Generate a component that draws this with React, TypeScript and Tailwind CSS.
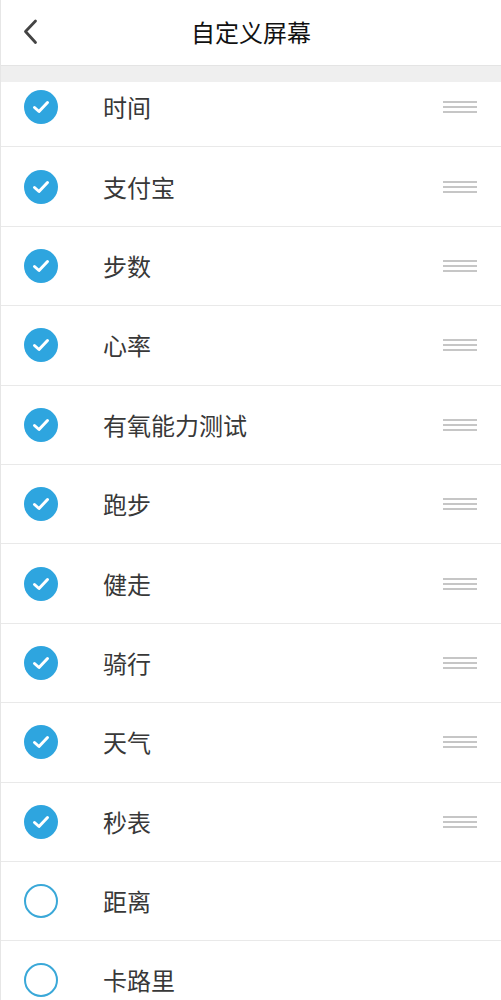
const items = [
  { name: "时间", on: true },
  { name: "支付宝", on: true },
  { name: "步数", on: true },
  { name: "心率", on: true },
  { name: "有氧能力测试", on: true },
  { name: "跑步", on: true },
  { name: "健走", on: true },
  { name: "骑行", on: true },
  { name: "天气", on: true },
  { name: "秒表", on: true },
  { name: "距离", on: false },
  { name: "卡路里", on: false },
];

function Check({ on }: { on: boolean }) {
  if (!on) {
    return (
      <div className="w-[34px] h-[34px] rounded-full border-2 border-[#3aa8d8] bg-white" />
    );
  }
  return (
    <div className="w-[34px] h-[34px] rounded-full bg-[#2ea5df] flex items-center justify-center">
      <svg width="22" height="22" viewBox="0 0 22 22" fill="none">
        <path
          d="M4.5 11.5 L9 15.5 L17.5 6.5"
          stroke="white"
          strokeWidth="3"
          strokeLinecap="round"
          strokeLinejoin="round"
        />
      </svg>
    </div>
  );
}

function Handle() {
  return (
    <div className="flex flex-col gap-[3px] w-[34px]">
      <div className="h-[2px] bg-[#c6c6c6]" />
      <div className="h-[2px] bg-[#c6c6c6]" />
      <div className="h-[2px] bg-[#c6c6c6]" />
    </div>
  );
}

function Row({ name, on }: { name: string; on: boolean }) {
  return (
    <div className="h-[79.4px] flex items-center border-b border-[#e9e9e9] pl-[23px] pr-[24px]">
      <Check on={on} />
      <span className="ml-[45px] flex-1 text-[24px] leading-none text-[#383838]">{name}</span>
      {on && <Handle />}
    </div>
  );
}

export default function App() {
  return (
    <div
      className="w-[501px] h-[1000px] overflow-hidden bg-white border-l border-[#e6e6e6]"
      style={{ fontFamily: '"Noto Sans CJK SC", "Noto Sans", sans-serif' }}
    >
      <header className="h-[66px] flex items-center relative border-b border-[#e4e4e4]">
        <svg
          className="absolute left-[20px] top-[18px]"
          width="18"
          height="28"
          viewBox="0 0 18 28"
          fill="none"
        >
          <path
            d="M14.5 3 L4.5 13.5 L14.5 24.5"
            stroke="#444444"
            strokeWidth="2.8"
            strokeLinecap="round"
            strokeLinejoin="round"
          />
        </svg>
        <h1 className="flex-1 text-center text-[24px] leading-none text-[#111111] pb-[1px]">自定义屏幕</h1>
      </header>
      <div className="h-[16px] bg-[#efefef]" />
      <div className="h-[65.4px] overflow-hidden">
        <div className="-mt-[14px]">
          <Row name={items[0].name} on={items[0].on} />
        </div>
      </div>
      {items.slice(1).map((it) => (
        <Row key={it.name} name={it.name} on={it.on} />
      ))}
    </div>
  );
}
